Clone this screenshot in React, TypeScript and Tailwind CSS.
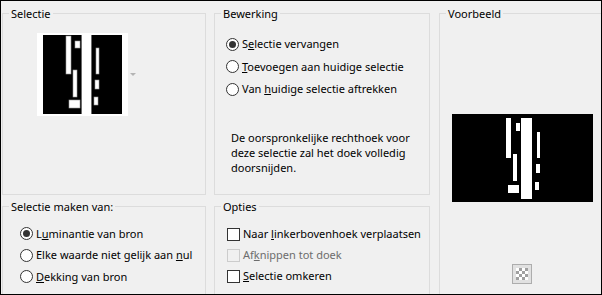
import React from 'react';

function Radio({ checked }: { checked?: boolean }) {
  return (
    <span className="flex h-[13px] w-[13px] shrink-0 items-center justify-center rounded-full border border-[#333333] bg-white">
      {checked && <span className="h-[7px] w-[7px] rounded-full bg-[#333333]" />}
    </span>
  );
}

function Check({ disabled }: { disabled?: boolean }) {
  return (
    <span
      className={
        disabled
          ? 'h-[13px] w-[13px] shrink-0 border border-[#cccccc] bg-[#f0f0f0]'
          : 'h-[13px] w-[13px] shrink-0 border border-[#333333] bg-white'
      }
    />
  );
}

function Group({ title, className, children }: { title: string; className?: string; children?: React.ReactNode }) {
  return (
    <div className={'relative border border-[#dcdcdc] ' + (className ?? '')}>
      {/* groepstitel over de rand */}
      <span className="absolute -top-[8px] left-[6px] bg-[#f0f0f0] px-[2px] leading-[16px] text-black">{title}</span>
      {children}
    </div>
  );
}

function Thumb() {
  return (
    <svg width="91" height="83" viewBox="0 0 91 83">
      <rect width="91" height="83" fill="#fff" />
      <rect x="6" y="2" width="38" height="79" fill="#000" />
      <rect x="44" y="2" width="1" height="79" fill="#6b6b6b" />
      <rect x="54" y="2" width="1" height="79" fill="#6b6b6b" />
      <rect x="55" y="2" width="30" height="79" fill="#000" />
      <g fill="#fff" stroke="#9a9a9a" strokeWidth="0.6">
        <rect x="29" y="3" width="5" height="38" />
        <rect x="38" y="8" width="5" height="7" />
        <rect x="36" y="37" width="4" height="27" />
        <rect x="32" y="67" width="11" height="8" />
        <rect x="59" y="15" width="3" height="26" />
        <rect x="58" y="47" width="4" height="9" />
        <rect x="57" y="64" width="4" height="8" />
      </g>
    </svg>
  );
}

function Preview() {
  return (
    <svg width="141" height="88" viewBox="0 0 141 88">
      <rect width="141" height="88" fill="#000" />
      <g fill="#fff">
        <rect x="54" y="4" width="5" height="40" />
        <rect x="64" y="9" width="4" height="8" />
        <rect x="69" y="4" width="11" height="81" />
        <rect x="61" y="40" width="4" height="27" />
        <rect x="56" y="71" width="11" height="8" />
        <rect x="85" y="18" width="3" height="26" />
        <rect x="84" y="50" width="4" height="9" />
        <rect x="83" y="68" width="4" height="8" />
      </g>
    </svg>
  );
}

function Checker() {
  const cells = [];
  for (let r = 0; r < 4; r++) {
    for (let c = 0; c < 4; c++) {
      if ((r + c) % 2 === 1) cells.push(<rect key={r + '-' + c} x={c * 3} y={r * 3} width="3" height="3" fill="#a0a0a0" />);
    }
  }
  return (
    <button className="flex h-[20px] w-[20px] items-center justify-center border border-[#adadad] bg-[#e1e1e1]">
      <svg width="12" height="12" viewBox="0 0 12 12">
        <rect width="12" height="12" fill="#fff" />
        {cells}
      </svg>
    </button>
  );
}

export default function App() {
  return (
    <div className="h-[295px] w-[602px] overflow-hidden border border-black bg-[#f0f0f0] font-['Noto_Sans',sans-serif] text-[11px] text-black">
      <div className="grid grid-cols-[204px_216px_170px] grid-rows-[182px_120px] gap-x-[8px] gap-y-[11px] pl-[1px] pt-[12px]">
        <Group title="Selectie">
          <div className="ml-[34px] mt-[19px] flex items-center gap-[2px]">
            <Thumb />
            <span className="h-0 w-0 border-x-[3px] border-t-[3px] border-x-transparent border-t-[#b4b4b4]" />
          </div>
        </Group>

        <Group title="Bewerking">
          <div className="flex flex-col gap-[6.5px] pl-[11px] pt-[22px]">
            <label className="flex h-[16px] items-center gap-[3px] leading-[16px]">
              <Radio checked />
              <span>S<u>e</u>lectie vervangen</span>
            </label>
            <label className="flex h-[16px] items-center gap-[3px] leading-[16px]">
              <Radio />
              <span><u>T</u>oevoegen aan huidige selectie</span>
            </label>
            <label className="flex h-[16px] items-center gap-[3px] leading-[16px]">
              <Radio />
              <span>Van <u>h</u>uidige selectie aftrekken</span>
            </label>
          </div>
          <p className="ml-[16px] mt-[33px] w-[186px] leading-[15px]">
            De oorspronkelijke rechthoek voor deze selectie zal het doek volledig doorsnijden.
          </p>
        </Group>

        <Group title="Voorbeeld" className="row-span-2 ml-[1px]">
          <div className="flex flex-col pl-[12px] pt-[100px]">
            <Preview />
            <div className="ml-[60px] mt-[62px]">
              <Checker />
            </div>
          </div>
        </Group>

        <Group title="Selectie maken van:">
          <div className="flex flex-col gap-[5.5px] pl-[17px] pt-[18.5px]">
            <label className="flex h-[16px] items-center gap-[3px] leading-[16px]">
              <Radio checked />
              <span>L<u>u</u>minantie van bron</span>
            </label>
            <label className="flex h-[16px] items-center gap-[3px] leading-[16px]">
              <Radio />
              <span>Elke waarde niet gelijk aan <u>n</u>ul</span>
            </label>
            <label className="flex h-[16px] items-center gap-[3px] leading-[16px]">
              <Radio />
              <span><u>D</u>ekking van bron</span>
            </label>
          </div>
        </Group>

        <Group title="Opties">
          <div className="flex flex-col gap-[5px] pl-[12px] pt-[19px]">
            <label className="flex h-[16px] items-center gap-[3px] leading-[16px]">
              <Check />
              <span>Naar <u>l</u>inkerbovenhoek verplaatsen</span>
            </label>
            <label className="flex h-[16px] items-center gap-[3px] leading-[16px] text-[#6d6d6d]">
              <Check disabled />
              <span>Af<u>k</u>nippen tot doek</span>
            </label>
            <label className="flex h-[16px] items-center gap-[3px] leading-[16px]">
              <Check />
              <span><u>S</u>electie omkeren</span>
            </label>
          </div>
        </Group>
      </div>
    </div>
  );
}
